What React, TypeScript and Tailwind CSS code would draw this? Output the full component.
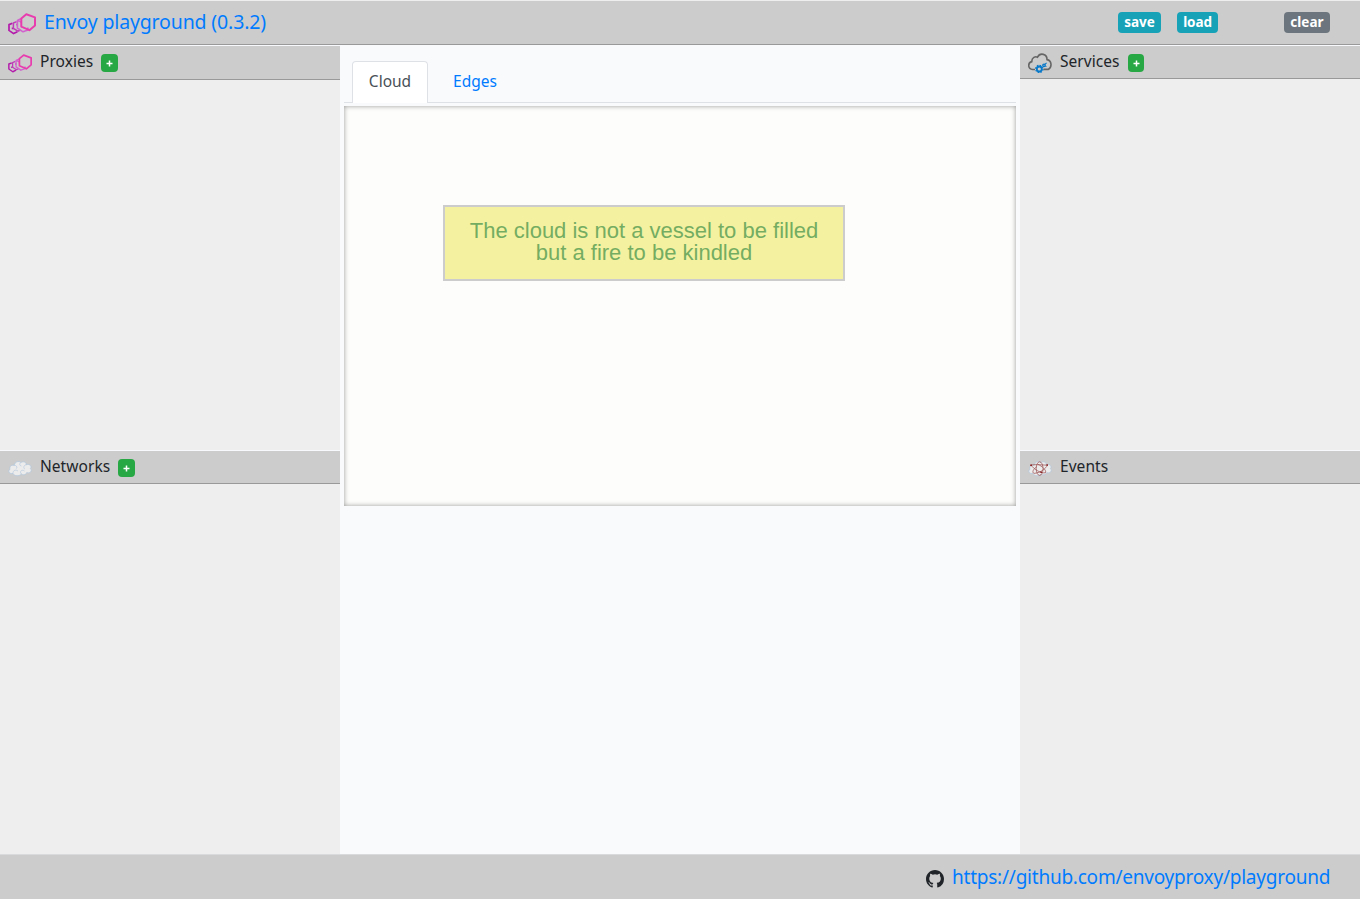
import type { ReactNode } from 'react';

function EnvoyLogo({ className }: { className: string }) {
  return (
    <svg viewBox="0 0 28 22" className={className} fill="none" strokeLinejoin="round">
      <path d="M4.4 10.2 1 11.6V17.4L5.6 20.6 9.4 18.8M4.6 14.4V16.2" stroke="#b31aab" strokeWidth="1.7" />
      <path d="M8.6 8.6 5.4 10V15.4L9.8 18.2 12.4 17M9 10.8V12.6" stroke="#c03dba" strokeWidth="1.5" />
      <path d="M12.8 5.8 9.4 7.4V15L15 18.8 19.8 17V14.6M9.6 7.4 13.6 9.4" stroke="#d163ce" strokeWidth="1.6" />
      <path d="M18.3 1.2 27 4.4V12.6L21.4 17.2 13.3 13.6V5.4Z" stroke="#e83cae" strokeWidth="2" />
    </svg>
  );
}

function ServicesIcon() {
  return (
    <svg viewBox="0 0 24 20" className="h-5 w-6 shrink-0" fill="none">
      <path d="M7 16.5H4.6C-.4 16-.4 9.6 3.8 8.6 3.6 4.4 7.6 3 9.5 4.2 12-.8 19.2.8 19 6.6 24 7.4 24.2 14.6 20.2 16.4H15.5" stroke="#666" strokeWidth="1.6" />
      <circle cx="11.3" cy="16" r="2.5" stroke="#0878c8" strokeWidth="1.8" />
      <circle cx="11.3" cy="16" r="3.7" stroke="#0878c8" strokeWidth="1.2" strokeDasharray="1.5 1.4" />
      <circle cx="16" cy="12.3" r="1.2" stroke="#0878c8" strokeWidth="1.4" />
      <path d="M16.8 11.4 18.6 9.8M17.4 13 18.4 13.6" stroke="#0878c8" strokeWidth="1.1" />
    </svg>
  );
}

const puffs = 'M5 13.5C1 14.5-.6 10.5 2 9.4.9 6.2 4.2 4.5 6 5.4 7 1.5 11 .5 12.7 2.6 15.5.8 18.6 2.2 18.2 4.8 21.5 3.6 24.4 6.2 22.4 8.6 25 11.2 21.4 13.8 18.8 12.6 17.4 15.6 14.4 15 13.4 14 11 16.6 6.4 16.2 5 13.5Z';

function CloudIcon() {
  return (
    <svg viewBox="0 0 24 17" className="h-[17px] w-6 shrink-0" fill="none">
      <path d={puffs} fill="#ececec" stroke="#b4c8dc" strokeWidth=".8" />
      <path d="M6 5.4C8.5 5 9.5 7 8.4 8.6M12.7 2.6C11 4 11.6 5.8 13.4 6M18.2 4.8C15.5 5.2 15 8 17 9.2M5 13.5C4.6 10.5 8 9 10 11.2M13.4 14C11 11.5 14 9 16.5 11" stroke="#b4c8dc" strokeWidth=".7" />
    </svg>
  );
}

function EventsIcon() {
  return (
    <svg viewBox="0 0 24 17" className="h-[17px] w-6 shrink-0" fill="none">
      <path d={puffs} fill="#ececec" stroke="#b4c8dc" strokeWidth=".8" />
      <g stroke="#96494b" strokeWidth=".7">
        <ellipse cx="11.6" cy="8.6" rx="3.4" ry="6.8" />
        <path d="M2.8 5.2C8 4 16 5.2 19.6 5.2 17.5 8.4 13.5 12.6 6 13.4 3.6 12.4 5.4 9 8.6 6.8M3 5.4C7 9.4 12 13.4 17.4 12.8 19 10.6 14 6 9.6 4.2" />
      </g>
      <path d="M2.2 4.4h1.8v1.6H2.2zM18.4 4.2h1.6v1.6h-1.6zM12.4 11.4h1.6v1.6h-1.6z" fill="#8c2426" />
    </svg>
  );
}

function AddButton({ className }: { className: string }) {
  return (
    <button aria-label="add" className={`relative flex h-[18px] items-center justify-center rounded bg-[#28a745] text-white ${className}`}>
      <svg viewBox="0 0 7 7" className="h-[7px] w-[7px]">
        <path d="M3.5 .5V6.5M.5 3.5H6.5" stroke="currentColor" strokeWidth="1.5" />
      </svg>
    </button>
  );
}

function Panel({ icon, title, tight, add, className, head }: { icon: ReactNode; title: string; tight: string; add?: string; className: string; head: string }) {
  return (
    <section className={`border-t border-[#f8f9fc] bg-[#eee] ${className}`}>
      <header className={`flex items-start border-b border-[#999] bg-[#ccc] pl-2 ${head}`}>
        <div className="flex h-[34px] items-center">{icon}</div>
        <h2 className={`mt-[3px] ml-2 mr-2 text-[15.5px] leading-6 text-[#212529] whitespace-nowrap ${tight}`}>{title}</h2>
        {add && <AddButton className={`mt-2 ${add}`} />}
      </header>
    </section>
  );
}

export default function App() {
  return (
    <div className="flex h-[899px] w-[1360px] flex-col overflow-hidden bg-[#f8fafc] font-['Noto_Sans',sans-serif]">
      <header className="flex h-[45px] shrink-0 items-center border-t border-b border-t-[#eee] border-b-[#999] bg-[#ccc] pl-2 pr-[30px]">
        <EnvoyLogo className="mt-[3px] h-[22px] w-7 shrink-0" />
        <a className="relative -top-px ml-2 w-[222px] text-[19.5px] leading-7 tracking-[-0.14px] whitespace-nowrap text-[#007bff]">Envoy playground (0.3.2)</a>
        <div className="ml-auto flex text-[13.5px] leading-[21px] font-bold text-white text-center">
          <button className="h-[21px] w-[43px] rounded bg-[#17a2b8]">save</button>
          <button className="ml-4 h-[21px] w-[41px] rounded bg-[#17a2b8] tracking-[-0.1px]">load</button>
          <button className="ml-[66px] h-[21px] w-[46px] rounded bg-[#6c757d] tracking-[0.05px]">clear</button>
        </div>
      </header>
      <div className="flex h-[809px] shrink-0">
        <aside className="flex w-[340px] flex-col">
          <Panel icon={<EnvoyLogo className="h-[19px] w-6" />} title="Proxies" tight="w-[53px] tracking-[0.05px]" add="w-[17px]" className="h-[405px]" head="h-[34px]" />
          <Panel icon={<CloudIcon />} title="Networks" tight="w-[70px] tracking-[0.05px]" add="w-[17px]" className="h-[404px]" head="h-[33px]" />
        </aside>
        <main className="flex w-[680px] flex-col px-1 pt-4">
          <nav className="flex h-[42px] border-b border-[#dee2e6] pl-2 text-[15.5px] leading-6 whitespace-nowrap">
            <a className="h-[42px] w-[76px] rounded-t border border-b-0 border-[#dee2e6] bg-white pt-[7px] text-center text-[#495057]">Cloud</a>
            <a className="w-[94px] pt-2 text-center text-[#007bff]">Edges</a>
          </nav>
          <div className="mt-[3px] h-[400px] bg-[#fdfdfb] pt-[99px] pl-[99px] shadow-[inset_0_0_5px_#999]">
            <div className="h-[76px] w-[402px] border-2 border-[#ccc] bg-[#f4f2a0] pt-[13px] text-center font-['Liberation_Sans',sans-serif] text-[22px] leading-[22px] whitespace-nowrap text-[#74ad62]">
              The cloud is not a vessel to be filled
              <br />
              but a fire to be kindled
            </div>
          </div>
        </main>
        <aside className="flex w-[340px] flex-col">
          <Panel icon={<ServicesIcon />} title="Services" tight="w-[60px] tracking-[0.05px]" add="w-4" className="h-[405px]" head="h-[33px]" />
          <Panel icon={<EventsIcon />} title="Events" tight="w-12 tracking-[0.05px]" className="h-[404px]" head="h-[33px]" />
        </aside>
      </div>
      <footer className="flex h-[45px] shrink-0 items-center justify-end border-t border-[#d8dadc] bg-[#ccc] pr-[30px]">
        <svg viewBox="0 0 16 16" className="relative top-[2px] mr-2 h-[18px] w-[18px]" fill="#212529">
          <path d="M8 0C3.58 0 0 3.58 0 8c0 3.54 2.29 6.53 5.47 7.59.4.07.55-.17.55-.38 0-.19-.01-.82-.01-1.49-2.01.37-2.53-.49-2.69-.94-.09-.23-.48-.94-.82-1.13-.28-.15-.68-.52-.01-.53.63-.01 1.08.58 1.23.82.72 1.21 1.87.87 2.33.66.07-.52.28-.87.51-1.07-1.78-.2-3.64-.89-3.64-3.95 0-.87.31-1.59.82-2.15-.08-.2-.36-1.02.08-2.12 0 0 .67-.21 2.2.82a7.6 7.6 0 0 1 4 0c1.53-1.04 2.2-.82 2.2-.82.44 1.1.16 1.92.08 2.12.51.56.82 1.27.82 2.15 0 3.07-1.87 3.75-3.65 3.95.29.25.54.73.54 1.48 0 1.07-.01 1.93-.01 2.2 0 .21.15.46.55.38A8.01 8.01 0 0 0 16 8c0-4.42-3.58-8-8-8Z" />
        </svg>
        <a className="w-[378px] text-[19px] leading-7 tracking-[-0.23px] whitespace-nowrap text-[#007bff]">https://github.com/envoyproxy/playground</a>
      </footer>
    </div>
  );
}
